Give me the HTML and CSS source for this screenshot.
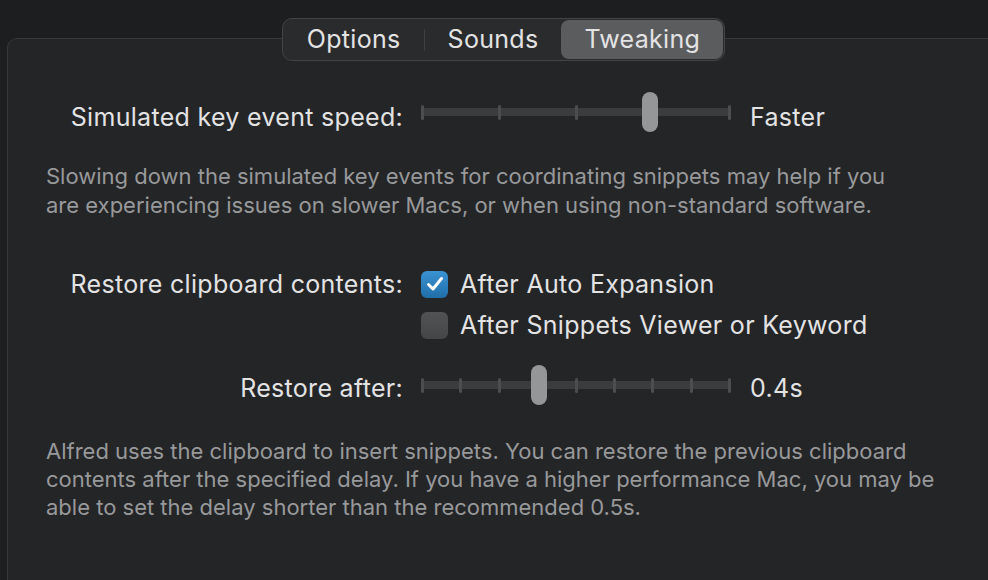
FILE: index.html
```html
<!DOCTYPE html>
<html lang="en">
<head>
    <meta charset="UTF-8">
    <title>Snippets - Tweaking</title>
    <link rel="stylesheet" href="styles.css">
</head>
<body>
    <div class="panel">
        <div class="tabs">
            <div class="tab">Options</div>
            <div class="tab-divider"></div>
            <div class="tab">Sounds</div>
            <div class="tab selected">Tweaking</div>
        </div>

        <div class="row row-speed">
            <div class="label">Simulated key event speed:</div>
            <div class="slider">
                <div class="track">
                    <span class="tick"></span><span class="tick"></span><span class="tick"></span><span class="tick"></span><span class="tick"></span>
                </div>
                <div class="knob" style="left: 221px;"></div>
            </div>
            <div class="value">Faster</div>
        </div>

        <p class="note note-speed">Slowing down the simulated key events for coordinating snippets may help if you<br>are experiencing issues on slower Macs, or when using non-standard software.</p>

        <div class="row row-restore">
            <div class="label">Restore clipboard contents:</div>
            <div class="checks">
                <label class="check">
                    <span class="box checked">
                        <svg width="18" height="16" viewBox="0 0 18 16"><path d="M2.5 8.5 L7 13 L15.5 2.5" fill="none" stroke="#fff" stroke-width="3" stroke-linecap="round" stroke-linejoin="round"/></svg>
                    </span>
                    After Auto Expansion
                </label>
                <label class="check">
                    <span class="box"></span>
                    After Snippets Viewer or Keyword
                </label>
            </div>
        </div>

        <div class="row row-after">
            <div class="label">Restore after:</div>
            <div class="slider">
                <div class="track">
                    <span class="tick"></span><span class="tick"></span><span class="tick"></span><span class="tick"></span><span class="tick"></span><span class="tick"></span><span class="tick"></span><span class="tick"></span><span class="tick"></span>
                </div>
                <div class="knob" style="left: 110px;"></div>
            </div>
            <div class="value">0.4s</div>
        </div>

        <p class="note note-after">Alfred uses the clipboard to insert snippets. You can restore the previous clipboard<br>contents after the specified delay. If you have a higher performance Mac, you may be<br>able to set the delay shorter than the recommended 0.5s.</p>
    </div>
</body>
</html>
```

FILE: styles.css
```css
html, body { margin: 0; height: 100%; overflow: hidden; }
body { background: #1d1e20; font-family: Inter, "Open Sans", sans-serif; color: #e3e3e4; }

.panel { margin: 38px 0 0 7px; width: 993px; height: 560px; box-sizing: border-box; border: 1px solid #38393b; border-radius: 10px; background: #242527; }

.tabs { display: flex; align-items: center; width: fit-content; height: 43px; box-sizing: border-box; margin: -21px auto 0; border: 1px solid #434446; border-radius: 10px; background: #2a2b2d; padding: 0 1px; }
.tab { padding: 0 23px; font-size: 25px; letter-spacing: 0.3px; line-height: 39px; border-radius: 8px; }
.tab-divider { width: 1px; height: 22px; background: #3d3e40; }
.tab.selected { background: #5b5c5e; }

.row { display: grid; grid-template-columns: 395px 310px auto; column-gap: 18px; align-items: center; }
.label { text-align: right; font-size: 25px; letter-spacing: 0.3px; line-height: 28px; }
.value { font-size: 25px; letter-spacing: 0.3px; line-height: 28px; padding-left: 1px; }

.row-speed { margin-top: 31px; height: 40px; }
.row-speed .label, .row-speed .value { margin-top: 10px; }
.row-restore { margin-top: 50px; align-items: start; }
.row-after { margin-top: 26px; height: 40px; }
.row-after .label, .row-after .value { margin-top: 6px; }

.slider { position: relative; height: 40px; }
.track { display: flex; justify-content: space-between; align-items: center; height: 8px; margin-top: 16px; background: #3b3c3e; border-radius: 4px; }
.tick { width: 3px; height: 15px; border-radius: 1.5px; background: #4c4d4f; }
.knob { position: absolute; top: 0; width: 16px; height: 40px; border-radius: 8px; background: #959698; }

.note { margin: 0; padding-left: 38px; font-size: 22px; line-height: 29px; color: #98999b; }
.note-speed { margin-top: 30px; }
.note-after { margin-top: 32px; line-height: 28px; }

.checks { display: flex; flex-direction: column; gap: 13px; grid-column: 2 / 4; }
.check { display: flex; align-items: center; gap: 12px; font-size: 25px; letter-spacing: 0.3px; height: 28px; }
.box { display: flex; align-items: center; justify-content: center; width: 27px; height: 27px; box-sizing: border-box; border-radius: 6px; background: linear-gradient(#525355, #444547); }
.box.checked { background: linear-gradient(#3b93d3, #1f6ea8); }
```
